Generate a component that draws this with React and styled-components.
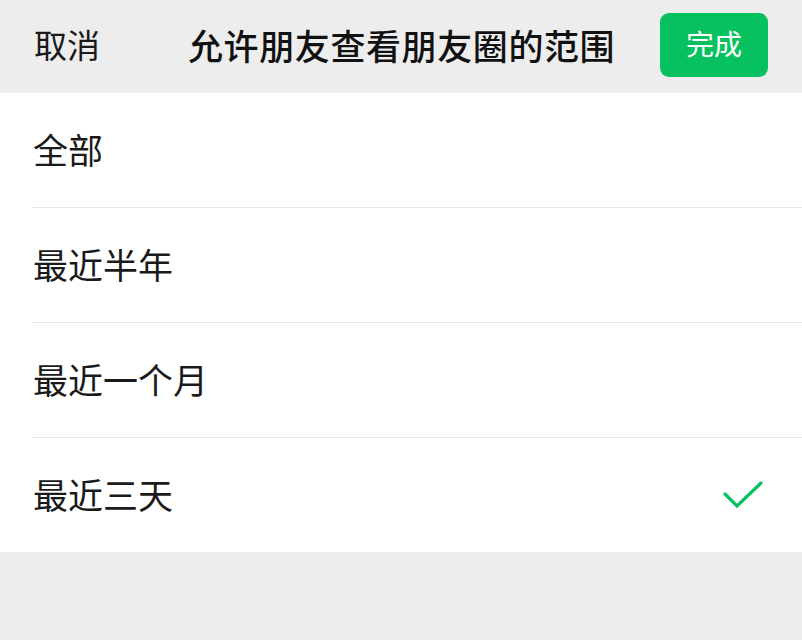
import React, { useState } from "react";
import styled, { createGlobalStyle } from "styled-components";

const GlobalStyle = createGlobalStyle`
  html, body {
    margin: 0;
    padding: 0;
    background: #ededed;
    font-family: "Noto Sans CJK SC", "Noto Sans", sans-serif;
  }
`;

const options = ["全部", "最近半年", "最近一个月", "最近三天"];

const App = () => {
  const [selected, setSelected] = useState(3);

  return (
    <Page>
      <GlobalStyle />
      <Header>
        <CancelButton>取消</CancelButton>
        <Title>允许朋友查看朋友圈的范围</Title>
        <DoneButton>完成</DoneButton>
      </Header>
      <List>
        {options.map((label, i) => (
          <Row key={label} $last={i === options.length - 1} onClick={() => setSelected(i)}>
            <RowLabel>{label}</RowLabel>
            {selected === i && (
              <svg width="42" height="32" viewBox="0 0 42 32">
                <path
                  d="M3 15 L15 27 L39 4"
                  fill="none"
                  stroke="#07c160"
                  strokeWidth="3.2"
                  strokeLinecap="round"
                  strokeLinejoin="miter"
                />
              </svg>
            )}
          </Row>
        ))}
      </List>
    </Page>
  );
};

const Page = styled.div`
  width: 802px;
  min-height: 640px;
  background: #ededed;
`;

const Header = styled.div`
  height: 93px;
  display: flex;
  align-items: center;
  padding: 0 34px 0 34px;
  box-sizing: border-box;
  background: #ededed;
`;

const CancelButton = styled.div`
  font-size: 33px;
  line-height: 1;
  color: #1a1a1a;
  width: 154px;
  margin-top: -4px;
`;

const Title = styled.div`
  flex: 1;
  font-size: 35px;
  line-height: 1;
  font-weight: 500;
  color: #111;
  letter-spacing: 0.6px;
  margin-top: -4px;
`;

const DoneButton = styled.button`
  width: 108px;
  height: 64px;
  border: none;
  border-radius: 9px;
  background: #07c160;
  color: #fff;
  font-family: inherit;
  font-size: 28px;
  cursor: pointer;
  padding: 0 0 4px 0;
  margin-top: -3px;
`;

const List = styled.div`
  background: #fff;
  padding-left: 33px;
`;

const Row = styled.div`
  height: 114px;
  display: flex;
  align-items: center;
  justify-content: space-between;
  padding-right: 38px;
  border-bottom: ${(p) => (p.$last ? "none" : "1px solid #e6e6e6")};
  box-sizing: content-box;
  cursor: pointer;
`;

const RowLabel = styled.div`
  font-size: 35px;
  line-height: 1;
  color: #1a1a1a;
  margin-top: -3px;
`;

export default App;
